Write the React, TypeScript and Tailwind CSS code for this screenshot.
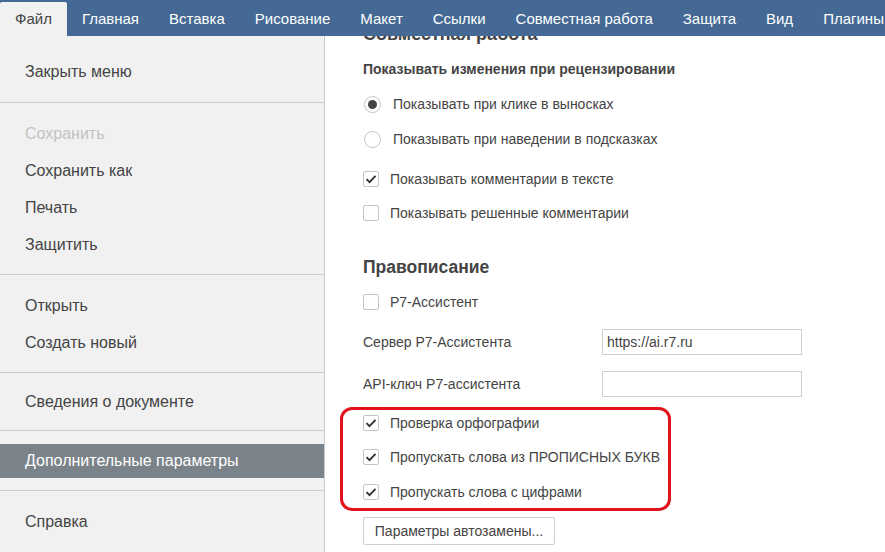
import React from 'react';

const tabs = ['Файл', 'Главная', 'Вставка', 'Рисование', 'Макет', 'Ссылки', 'Совместная работа', 'Защита', 'Вид', 'Плагины'];

interface MenuGroup {
  items: { label: string; disabled?: boolean; active?: boolean }[];
  pt: string;
  pb: string;
}

const menuGroups: MenuGroup[] = [
  { items: [{ label: 'Закрыть меню' }], pt: 'pt-[17px]', pb: 'pb-[12px]' },
  {
    items: [
      { label: 'Сохранить', disabled: true },
      { label: 'Сохранить как' },
      { label: 'Печать' },
      { label: 'Защитить' },
    ],
    pt: 'pt-[12px]',
    pb: 'pb-[11px]',
  },
  { items: [{ label: 'Открыть' }, { label: 'Создать новый' }], pt: 'pt-[12px]', pb: 'pb-[11px]' },
  { items: [{ label: 'Сведения о документе' }], pt: 'pt-[10px]', pb: 'pb-[10px]' },
  { items: [{ label: 'Дополнительные параметры', active: true }], pt: 'pt-[13px]', pb: 'pb-[12px]' },
  { items: [{ label: 'Справка' }], pt: 'pt-[12px]', pb: 'pb-[12px]' },
];

const Checkbox: React.FC<{ checked?: boolean; label: string }> = ({ checked = false, label }) => (
  <div className="flex h-[24px] items-center">
    <span className="flex h-[16px] w-[16px] shrink-0 items-center justify-center rounded-[2px] border border-[#c4c4c4] bg-white">
      {checked && (
        <svg width="14" height="14" viewBox="0 0 14 14">
          <polyline points="2.5,7.2 5.5,10.2 11.5,3.8" fill="none" stroke="#333" strokeWidth="1.9" />
        </svg>
      )}
    </span>
    <span className="ml-[11px] whitespace-nowrap">{label}</span>
  </div>
);

const Radio: React.FC<{ checked?: boolean; label: string }> = ({ checked = false, label }) => (
  <div className="flex h-[24px] items-center">
    <span className="ml-[1px] flex h-[17px] w-[17px] shrink-0 items-center justify-center rounded-full border border-[#c4c4c4] bg-white">
      {checked && <span className="h-[9px] w-[9px] rounded-full bg-[#444]" />}
    </span>
    <span className="ml-[12px] whitespace-nowrap">{label}</span>
  </div>
);

export default function App() {
  return (
    <div className="flex h-[552px] w-[885px] flex-col overflow-hidden bg-white font-['Liberation_Sans',Arial,sans-serif] text-[#444]">
      <div className="relative z-10 flex h-[36px] shrink-0 items-end overflow-hidden bg-[#446995]">
        {tabs.map((tab, i) => (
          <div
            key={tab}
            className={
              i === 0
                ? 'flex h-[34px] shrink-0 items-center whitespace-nowrap rounded-t-[2px] bg-[#f1f1f1] px-[15px] text-[15px] text-[#444]'
                : 'flex h-[34px] shrink-0 items-center whitespace-nowrap px-[15px] text-[15px] text-white'
            }
          >
            {tab}
          </div>
        ))}
      </div>

      <div className="flex min-h-0 flex-1">
        <div className="w-[325px] shrink-0 border-r border-[#cbcbcb] bg-[#f1f1f1] text-[16px]">
          {menuGroups.map((group, gi) => (
            <div key={gi} className={`${group.pt} ${group.pb} ${gi > 0 ? 'border-t border-[#cbcbcb]' : ''}`}>
              {group.items.map((item) => (
                <div
                  key={item.label}
                  className={
                    item.active
                      ? 'flex h-[34px] items-center bg-[#7b838a] pl-[25px] text-white'
                      : item.disabled
                        ? 'flex h-[37px] items-center pl-[25px] text-[#c3c3c3]'
                        : 'flex h-[37px] items-center pl-[25px]'
                  }
                >
                  {item.label}
                </div>
              ))}
            </div>
          ))}
        </div>

        <div className="min-w-0 flex-1 overflow-hidden">
          <div className="-mt-[13px] pl-[38px] text-[14px]">
            <div className="flex h-[22px] items-center text-[18px] font-bold">Совместная работа</div>
            <div className="mt-[14px] flex h-[20px] items-center font-bold">
              Показывать изменения при рецензировании
            </div>
            <div className="mt-[13px]">
              <Radio checked label="Показывать при клике в выносках" />
            </div>
            <div className="mt-[11px]">
              <Radio label="Показывать при наведении в подсказках" />
            </div>
            <div className="mt-[16px]">
              <Checkbox checked label="Показывать комментарии в тексте" />
            </div>
            <div className="mt-[10px]">
              <Checkbox label="Показывать решенные комментарии" />
            </div>

            <div className="mt-[29px] flex h-[26px] items-center text-[17.5px] font-bold">Правописание</div>
            <div className="mt-[10px]">
              <Checkbox label="Р7-Ассистент" />
            </div>
            <div className="mt-[15px] flex h-[26px] items-center">
              <span className="w-[239px]">Сервер Р7-Ассистента</span>
              <div className="flex h-[26px] w-[200px] items-center border border-[#cfcfcf] px-[4px]">https://ai.r7.ru</div>
            </div>
            <div className="mt-[16px] flex h-[26px] items-center">
              <span className="w-[239px]">API-ключ Р7-ассистента</span>
              <div className="h-[26px] w-[200px] border border-[#cfcfcf]" />
            </div>

            <div className="-ml-[23px] mt-[10px] w-[331px] rounded-[12px] border-[3px] border-[#e0121b] pb-[4px] pl-[20px] pt-[1px]">
              <Checkbox checked label="Проверка орфографии" />
              <div className="mt-[10px]">
                <Checkbox checked label="Пропускать слова из ПРОПИСНЫХ БУКВ" />
              </div>
              <div className="mt-[11px]">
                <Checkbox checked label="Пропускать слова с цифрами" />
              </div>
            </div>

            <button className="mt-[6px] flex h-[28px] w-[192px] items-center justify-center rounded-[2px] border border-[#cfcfcf] bg-white text-[14px] text-[#444]">
              Параметры автозамены...
            </button>
          </div>
        </div>
      </div>
    </div>
  );
}
